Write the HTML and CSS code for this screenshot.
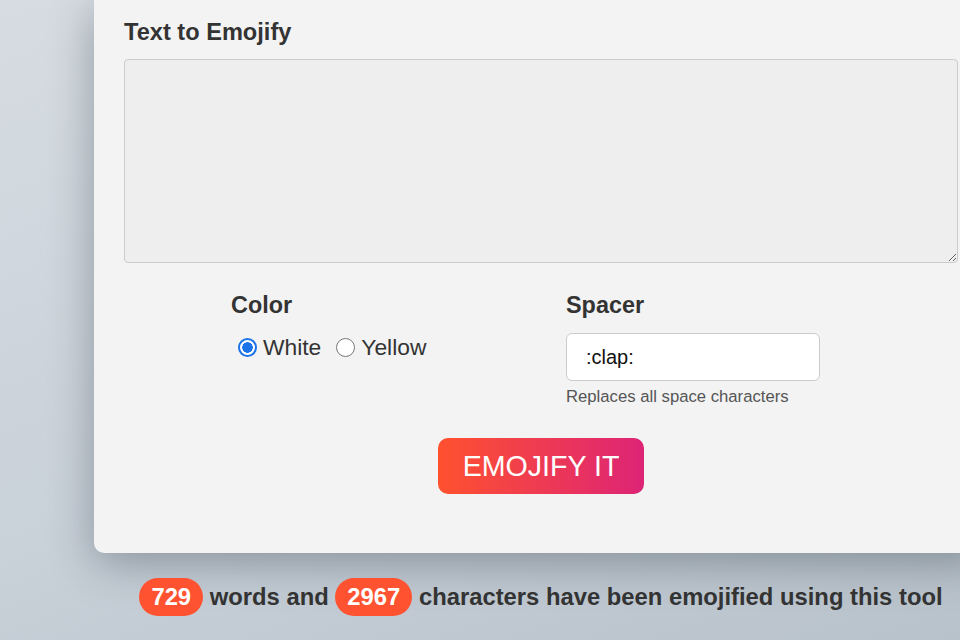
FILE: index.html
```html
<!DOCTYPE html>
<html lang="en">
<head>
<meta charset="utf-8">
<title>Emojify</title>
<link rel="stylesheet" href="styles.css">
</head>
<body>
<div class="page">
  <main class="card">
    <h2 class="title">Text to Emojify</h2>
    <textarea class="source"></textarea>
    <div class="options">
      <div class="option">
        <h3 class="option-label">Color</h3>
        <div class="radios">
          <label class="radio"><input type="radio" name="color" checked><span>White</span></label>
          <label class="radio"><input type="radio" name="color"><span>Yellow</span></label>
        </div>
      </div>
      <div class="option">
        <h3 class="option-label">Spacer</h3>
        <input class="spacer" type="text" value=":clap:">
        <p class="hint">Replaces all space characters</p>
      </div>
    </div>
    <div class="actions">
      <button class="go" type="button">EMOJIFY IT</button>
    </div>
  </main>
  <p class="stats"><span class="badge">729</span> words and <span class="badge">2967</span> characters have been emojified using this tool</p>
</div>
</body>
</html>
```

FILE: styles.css
```css
html, body {
  margin: 0;
  padding: 0;
  height: 100%;
}
body {
  overflow: hidden;
  font-family: "Liberation Sans", Arial, sans-serif;
  color: #333;
  background: linear-gradient(160deg, #d6dce2 0%, #c9d1d9 55%, #b8c2cb 100%);
}
.page {
  width: 894px;
  margin-left: 94px;
}
.card {
  background: #f3f3f3;
  border-radius: 0 0 10px 10px;
  box-shadow: 0 10px 44px rgba(40, 50, 60, 0.38);
  padding: 18px 30px 59px;
}
.title {
  margin: 0 0 13px;
  font-size: 23.6px;
  line-height: 28px;
  font-weight: bold;
  color: #333;
}
.source {
  display: block;
  box-sizing: border-box;
  width: 834px;
  height: 204px;
  margin: 0;
  background: #eeeeee;
  border: 1px solid #cccccc;
  border-radius: 4px;
  resize: vertical;
}
.options {
  display: grid;
  grid-template-columns: 335px 335px;
  justify-content: center;
  margin-top: 28px;
}
.option {
  padding-left: 25px;
}
.option-label {
  margin: 0;
  font-size: 23.4px;
  line-height: 28px;
  font-weight: bold;
  color: #333;
}
.radios {
  display: flex;
  gap: 15px;
  margin-top: 15px;
  padding-left: 7px;
}
.radio {
  display: flex;
  align-items: center;
  gap: 6px;
  font-size: 22.8px;
  line-height: 27px;
  color: #333;
}
.radio input {
  appearance: none;
  -webkit-appearance: none;
  box-sizing: border-box;
  width: 19px;
  height: 19px;
  margin: 0;
  border: 1.5px solid #767676;
  border-radius: 50%;
  background: #fff;
}
.radio input:checked {
  border: 2px solid #1a73e8;
  background: radial-gradient(circle, #1a73e8 0 5px, #fff 5.5px);
}
.spacer {
  display: block;
  box-sizing: border-box;
  width: 254px;
  height: 48px;
  margin-top: 14px;
  padding: 0 19px;
  font-family: "Liberation Sans", Arial, sans-serif;
  font-size: 20px;
  color: #111;
  background: #fff;
  border: 1px solid #cccccc;
  border-radius: 6px;
}
.hint {
  margin: 6px 0 0;
  font-size: 16.7px;
  line-height: 20px;
  color: #555;
}
.actions {
  display: flex;
  justify-content: center;
  margin-top: 31px;
}
.go {
  box-sizing: border-box;
  height: 56px;
  padding: 0 25px;
  border: none;
  border-radius: 10px;
  background: linear-gradient(90deg, #ff512f, #dd2476);
  color: #fff;
  font-family: "Liberation Sans", Arial, sans-serif;
  font-size: 28.6px;
}
.stats {
  margin: 25px 0 0;
  text-align: center;
  font-size: 23.8px;
  line-height: 38px;
  font-weight: bold;
  color: #333;
}
.badge {
  display: inline-block;
  padding: 0 12px;
  border-radius: 19px;
  background: #ff5230;
  color: #fff;
}
```
